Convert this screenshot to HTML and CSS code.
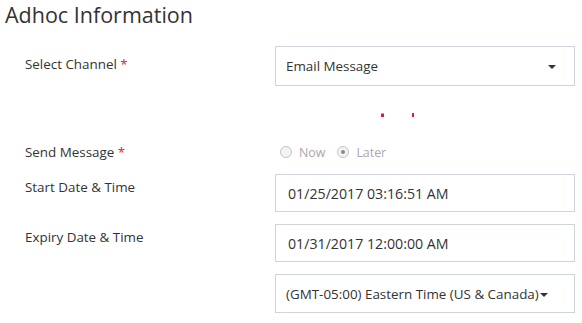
FILE: index.html
```html
<!DOCTYPE html>
<html lang="en">

<head>
    <meta charset="UTF-8">
    <meta name="viewport" content="width=device-width, initial-scale=1.0">
    <title>Adhoc Information</title>
    <link rel="stylesheet" href="styles.css">
</head>

<body>

    <div class="adhoc-panel">
        <h1>Adhoc Information</h1>

        <div class="form-row row-channel">
            <label class="form-label">Select Channel <span class="required">*</span></label>
            <div class="form-control select-control">
                <span>Email Message</span>
                <span class="caret"></span>
            </div>
        </div>

        <div class="error-line">
            <span class="mark mark-a"></span>
            <span class="mark mark-b"></span>
        </div>

        <div class="form-row row-send">
            <label class="form-label">Send Message <span class="required">*</span></label>
            <div class="radio-group">
                <span class="radio"></span><span class="radio-text">Now</span>
                <span class="radio checked"></span><span class="radio-text">Later</span>
            </div>
        </div>

        <div class="form-row">
            <label class="form-label">Start Date &amp; Time</label>
            <div class="form-control date-control">01/25/2017 03:16:51 AM</div>
        </div>

        <div class="form-row">
            <label class="form-label">Expiry Date &amp; Time</label>
            <div class="form-control date-control">01/31/2017 12:00:00 AM</div>
        </div>

        <div class="form-row">
            <label class="form-label"></label>
            <div class="form-control zone-control">
                <span>(GMT-05:00) Eastern Time (US &amp; Canada)</span>
                <span class="caret"></span>
            </div>
        </div>
    </div>

</body>

</html>
```

FILE: styles.css
```css
/* RESET */
* {
    margin: 0;
    padding: 0;
    box-sizing: border-box;
}

body {
    font-family: 'Open Sans', 'Noto Sans', sans-serif;
    background: #fff;
    color: #333;
    font-size: 13.4px;
}

.adhoc-panel {
    width: 582px;
}

.adhoc-panel h1 {
    font-size: 21.5px;
    font-weight: 400;
    line-height: 30px;
    padding-left: 5px;
    height: 46px;
    color: #333;
}

/* ROWS */
.form-row {
    display: flex;
    padding-left: 25px;
    margin-bottom: 12px;
}

.form-label {
    width: 250px;
    padding-top: 4px;
    line-height: 18px;
    color: #333;
}

.row-channel .form-label {
    padding-top: 9px;
}

.required {
    color: #e02424;
}

.form-control {
    width: 300px;
    height: 38px;
    border: 1px solid #cfd4db;
    display: flex;
    align-items: center;
    padding-left: 12px;
    color: #333;
}

.date-control {
    font-size: 14.2px;
}

.select-control {
    height: 40px;
    padding-left: 10px;
    padding-right: 18px;
    justify-content: space-between;
}

.zone-control {
    height: 39px;
    padding-left: 10px;
}

.caret {
    display: inline-block;
    width: 0;
    height: 0;
    border-left: 4px solid transparent;
    border-right: 4px solid transparent;
    border-top: 4px solid #333;
    margin-top: 2px;
}

.zone-control .caret {
    margin-left: 1px;
}

/* ERROR LINE */
.error-line {
    height: 45px;
    position: relative;
}

.mark {
    position: absolute;
    top: 15px;
    width: 2px;
    height: 4px;
    background: #e8105a;
}

.mark-a {
    left: 381px;
    border-top: 1px solid #f39a6a;
    width: 3px;
}

.mark-b {
    left: 412px;
}

/* RADIO */
.row-send {
    margin-bottom: 13px;
}

.row-send .form-label {
    padding-top: 0;
}

.radio-group {
    display: flex;
    align-items: center;
    height: 18px;
    padding-left: 5px;
    color: #a9a9a9;
    font-size: 12.4px;
}

.radio {
    width: 12px;
    height: 12px;
    border: 1px solid #c3c3c3;
    border-radius: 50%;
    background: #f4f4f4;
    margin-right: 7px;
    position: relative;
}

.radio.checked::after {
    content: '';
    position: absolute;
    left: 3px;
    top: 3px;
    width: 4px;
    height: 4px;
    border-radius: 50%;
    background: #8a8a8a;
}

.radio-text {
    margin-right: 12px;
}
```
